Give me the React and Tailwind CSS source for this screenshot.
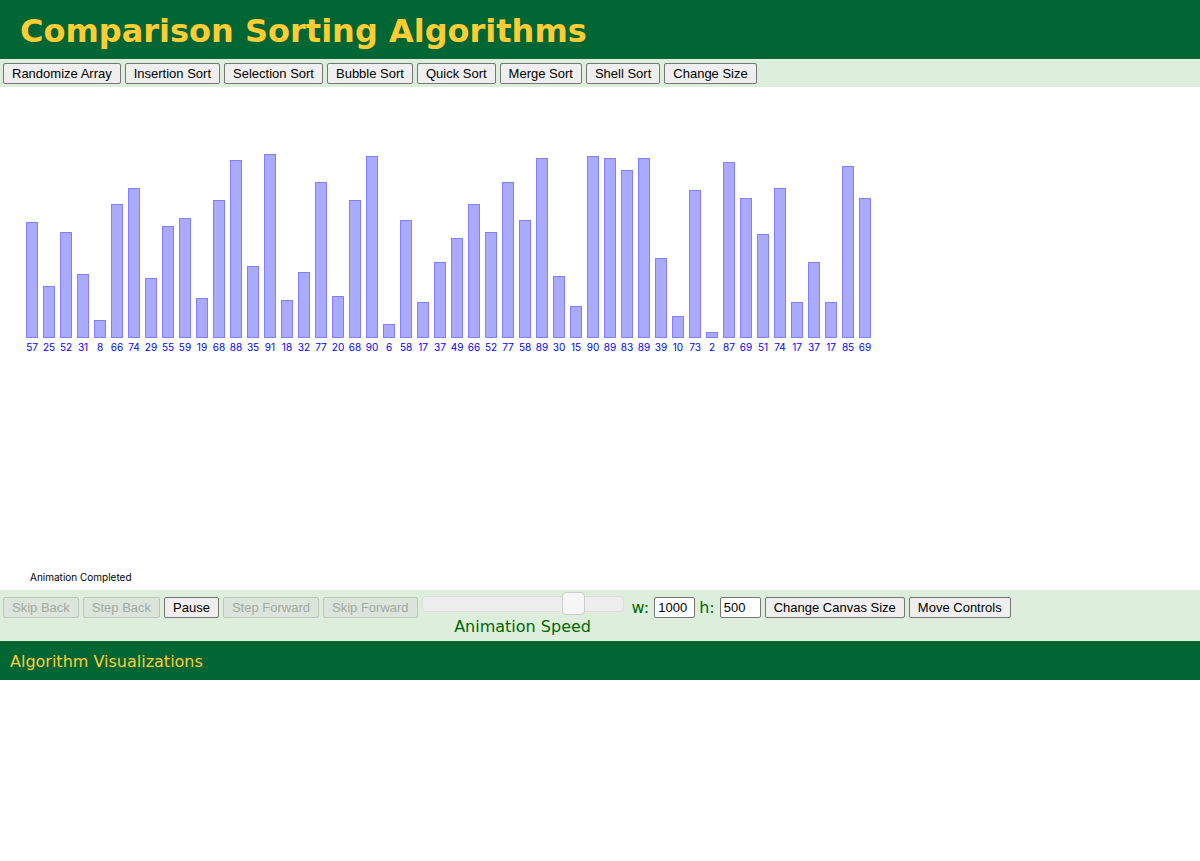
import { useState } from "react";

const VALUES = [
  57, 25, 52, 31, 8, 66, 74, 29, 55, 59, 19, 68, 88, 35, 91, 18, 32, 77, 20, 68,
  90, 6, 58, 17, 37, 49, 66, 52, 77, 58, 89, 30, 15, 90, 89, 83, 89, 39, 10, 73,
  2, 87, 69, 51, 74, 17, 37, 17, 85, 69,
];

const ALGORITHMS = [
  "Randomize Array",
  "Insertion Sort",
  "Selection Sort",
  "Bubble Sort",
  "Quick Sort",
  "Merge Sort",
  "Shell Sort",
  "Change Size",
];

const Button = ({ children, disabled }) => (
  <button
    type="button"
    disabled={disabled}
    className="h-[21px] shrink-0 whitespace-nowrap rounded-[2px] border border-[#767676] bg-[#efefef] px-2 font-['Liberation_Sans',Arial,sans-serif] text-[13px] leading-4 text-black disabled:border-[#bcc7bc] disabled:bg-[#dbe5db] disabled:text-[#a0aaa0]"
  >
    {children}
  </button>
);

const SizeInput = ({ id, label, value, onChange }) => (
  <>
    <label htmlFor={id} className="mr-px">
      {label}
    </label>
    <input
      id={id}
      type="text"
      value={value}
      onChange={(e) => onChange(e.target.value)}
      className="h-[21px] w-[41px] rounded-[2px] border border-[#767676] bg-white px-[3px] font-['Liberation_Sans',Arial,sans-serif] text-[13px] text-black"
    />
  </>
);

const Bar = ({ value }) => (
  <div className="flex w-3 flex-col items-center">
    {/* two pixels per unit, plus the border */}
    <div
      className="w-3 border border-[#7f7fff] bg-[#aaaaff]"
      style={{ height: value * 2 + 2 }}
    />
    <span className="mt-[3px] text-[10px] leading-3 text-[#0000ff]">{value}</span>
  </div>
);

const App = () => {
  const [speed, setSpeed] = useState(79);
  const [width, setWidth] = useState("1000");
  const [height, setHeight] = useState("500");

  return (
    <div className="bg-white font-['DejaVu_Sans',Verdana,sans-serif] text-base">
      <header className="bg-[#006633] px-5 pt-[11px] pb-2">
        <h1 className="text-[32px] leading-10 font-bold text-[#ffcc33]">
          Comparison Sorting Algorithms
        </h1>
      </header>

      <div className="flex flex-wrap gap-1 bg-[#ddeedd] px-[3px] pt-1 pb-[3px]">
        {ALGORITHMS.map((name) => (
          <Button key={name}>{name}</Button>
        ))}
      </div>

      <main className="flex flex-col font-['Inter',sans-serif]">
        <div className="flex h-[266px] items-end gap-[5px] px-[26px]">
          {VALUES.map((value, i) => (
            <Bar key={i} value={value} />
          ))}
        </div>
        <p className="mt-[218px] mb-[7px] px-[30px] text-[10px] leading-3 text-black">
          Animation Completed
        </p>
      </main>

      <div className="flex items-start gap-1 bg-[#ddeedd] px-[3px] pb-1 text-[#006600]">
        <div className="flex gap-1 pt-[7px]">
          <Button disabled>Skip Back</Button>
          <Button disabled>Step Back</Button>
          <Button>Pause</Button>
          <Button disabled>Step Forward</Button>
          <Button disabled>Skip Forward</Button>
        </div>
        <div className="mr-1 flex flex-col items-center pt-1.5">
          <input
            id="speed"
            type="range"
            min="0"
            max="100"
            value={speed}
            onChange={(e) => setSpeed(Number(e.target.value))}
            className="h-4 w-[202px] appearance-none rounded border border-[#dddddd] bg-[#eeeeee] [&::-webkit-slider-runnable-track]:h-3.5 [&::-webkit-slider-thumb]:-mt-[5px] [&::-webkit-slider-thumb]:size-[23px] [&::-webkit-slider-thumb]:appearance-none [&::-webkit-slider-thumb]:rounded [&::-webkit-slider-thumb]:border [&::-webkit-slider-thumb]:border-[#cccccc] [&::-webkit-slider-thumb]:bg-[#f6f6f6]"
          />
          <label htmlFor="speed" className="mt-1 leading-[21px]">
            Animation Speed
          </label>
        </div>
        <div className="flex items-center gap-1 pt-[7px] leading-[19px]">
          <SizeInput id="w" label="w:" value={width} onChange={setWidth} />
          <SizeInput id="h" label="h:" value={height} onChange={setHeight} />
          <Button>Change Canvas Size</Button>
          <Button>Move Controls</Button>
        </div>
      </div>

      <footer className="bg-[#006633] px-2.5 pt-[11px] pb-[9px] leading-[19px] text-[#ffcc33]">
        <a href="#">Algorithm Visualizations</a>
      </footer>
    </div>
  );
};

export default App;
